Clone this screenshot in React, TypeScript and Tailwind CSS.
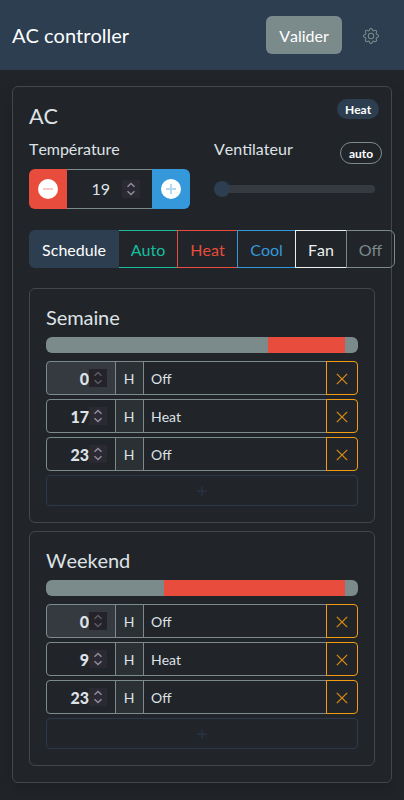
import React from "react";
import { BsGear, BsPlus, BsXLg } from "react-icons/bs";

type Slot = { hour: number; mode: string };

function Spinner({ disabled = false }: { disabled?: boolean }) {
  return (
    <span className={`flex h-[18px] w-[18px] items-center justify-center ${disabled ? "bg-[#232329] text-[#5c5b63]" : "bg-[#2b2a33] text-[#8f8d9b]"}`}>
      <svg width="18" height="18" viewBox="0 0 18 18" fill="none" stroke="currentColor" strokeWidth="1.5">
        <path d="M5.5 6.8 9 3.5l3.5 3.3M5.5 11.2 9 14.5l3.5-3.3" />
      </svg>
    </span>
  );
}

function Row({ slot, disabled }: { slot: Slot; disabled: boolean }) {
  return (
    <div className="flex h-[34px] text-sm">
      <div className={`flex w-[70px] items-center justify-end rounded-l border border-[#7b8a8b] pr-2 ${disabled ? "bg-[#343a40]" : ""}`}>
        <span className="pt-0.5 text-base font-black">{slot.hour}</span>
        <Spinner disabled={disabled} />
      </div>
      <div className="-ml-px flex w-[29px] items-center justify-center border border-[#7b8a8b] bg-[#2b3035] pt-0.5 pr-px">H</div>
      <div className="-ml-px flex w-[184px] items-center border border-[#7b8a8b] px-[7px] pt-0.5">{slot.mode}</div>
      <button className="-ml-px flex w-8 items-center justify-center rounded-r border border-[#f39c12] pt-0.5 text-[#f39c12]">
        <BsXLg size={14} strokeWidth={0.3} />
      </button>
    </div>
  );
}

function Program({ title, slots, offWidth, heatWidth }: { title: string; slots: Slot[]; offWidth: string; heatWidth: string }) {
  return (
    <section className="h-[235px] rounded-md border border-[#43474b] p-4">
      <h3 className="mb-2 text-xl leading-6 tracking-[-0.1px]">{title}</h3>
      <div className="mb-2 flex h-4 overflow-hidden rounded-md bg-[#7b8a8b]">
        <div className={offWidth} />
        <div className={`${heatWidth} bg-[#e74c3c]`} />
      </div>
      <div className="flex flex-col gap-1">
        {slots.map((slot, i) => (
          <Row key={i} slot={slot} disabled={i === 0} />
        ))}
        <button className="flex h-[31px] items-center justify-center rounded border border-[#2b3a4a] text-[#293747]">
          <BsPlus size={20} />
        </button>
      </div>
    </section>
  );
}

export default function App() {
  return (
    <div className="h-[800px] overflow-hidden bg-[#212529] font-['Lato',sans-serif] text-base text-[#dee2e6] [font-kerning:none]">
      <header className="flex h-[70px] items-center bg-[#2c3e50] px-3 text-white">
        <h1 className="text-xl">AC controller</h1>
        <button className="ml-auto h-[38px] w-[76px] rounded-md bg-[#7b8a8b] pt-0.5">Valider</button>
        <button className="mt-0.5 mr-[13px] ml-[21px] text-[#7b8a8b]">
          <BsGear size={16} />
        </button>
      </header>
      <main className="mx-3 mt-4 h-[697px] rounded-md border border-[#43474b] p-4 shadow-[0_8px_16px_rgba(0,0,0,0.15)]">
        <div className="mb-2 flex h-[26px] items-center justify-between">
          <h2 className="text-[21.6px] leading-[26px]">AC</h2>
          <span className="relative -top-[7px] left-1 flex h-5 w-[42px] items-center justify-center rounded-full bg-[#2c3e50] pt-0.5 text-xs font-bold text-white">Heat</span>
        </div>
        <div className="flex gap-6">
          <div className="w-[161px]">
            <div className="mb-2 leading-6 tracking-[-0.05px]">Température</div>
            <div className="flex h-10">
              <button className="flex w-[38px] items-center justify-center rounded-l-md bg-[#e74c3c]">
                <svg width="20" height="20" viewBox="0 0 20 20">
                  <circle cx="10" cy="10" r="10" fill="#fff" />
                  <path d="M5 10h10" stroke="#f7c9c5" strokeWidth="2" />
                </svg>
              </button>
              <div className="flex w-[85px] items-center justify-end border-y border-[#7b8a8b] pr-3">
                <span className="mr-3">19</span>
                <Spinner />
              </div>
              <button className="flex w-[38px] items-center justify-center rounded-r-md bg-[#3498db]">
                <svg width="20" height="20" viewBox="0 0 20 20">
                  <circle cx="10" cy="10" r="10" fill="#fff" />
                  <path d="M5 10h10M10 5v10" stroke="#b5d9f2" strokeWidth="2" />
                </svg>
              </button>
            </div>
          </div>
          <div className="w-[161px]">
            <div className="flex justify-between">
              <span className="leading-6">Ventilateur</span>
              <span className="relative top-[5px] left-[7px] flex h-[22px] w-[42px] items-center justify-center rounded-full border border-[#7b8a8b] pt-0.5 text-xs font-bold text-white">auto</span>
            </div>
            <div className="mt-6 h-2 rounded-full bg-[#343a40]">
              <div className="relative -top-1 h-4 w-4 rounded-full bg-[#2c3e50]" />
            </div>
          </div>
        </div>
        <div className="mt-[21px] mb-5 flex h-[38px] *:shrink-0 *:pt-0.5">
          <button className="z-10 w-[90px] rounded-l-md bg-[#2c3e50] text-white">Schedule</button>
          <button className="-ml-px w-[60px] border border-[#18bc9c] text-[#18bc9c]">Auto</button>
          <button className="-ml-px w-[61px] border border-[#e74c3c] text-[#e74c3c]">Heat</button>
          <button className="-ml-px w-[59px] border border-[#3498db] text-[#3498db]">Cool</button>
          <button className="-ml-px w-[52px] border border-[#ecf0f1] text-[#ecf0f1]">Fan</button>
          <button className="-ml-px w-[49px] rounded-r-md border border-[#7b8a8b] text-[#7b8a8b]">Off</button>
        </div>
        <div className="flex flex-col gap-2">
          <Program
            title="Semaine"
            offWidth="w-[222px]"
            heatWidth="w-[77px]"
            slots={[{ hour: 0, mode: "Off" }, { hour: 17, mode: "Heat" }, { hour: 23, mode: "Off" }]}
          />
          <Program
            title="Weekend"
            offWidth="w-[118px]"
            heatWidth="w-[181px]"
            slots={[{ hour: 0, mode: "Off" }, { hour: 9, mode: "Heat" }, { hour: 23, mode: "Off" }]}
          />
        </div>
      </main>
    </div>
  );
}
